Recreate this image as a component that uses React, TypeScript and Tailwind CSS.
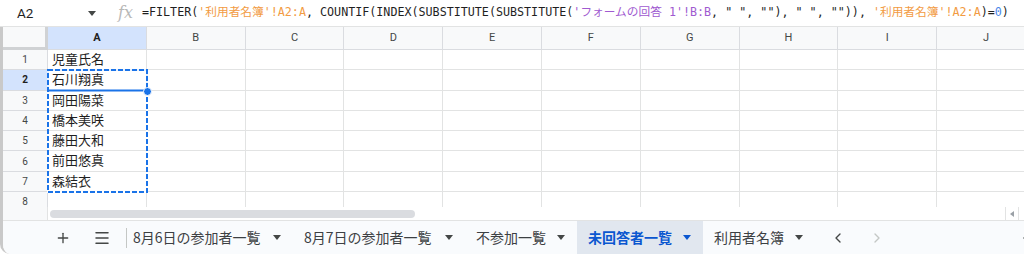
import { Plus, Menu, ChevronLeft, ChevronRight } from 'lucide-react';

const COLS = ['A', 'B', 'C', 'D', 'E', 'F', 'G', 'H', 'I', 'J'];
const NAMES = ['児童氏名', '石川翔真', '岡田陽菜', '橋本美咲', '藤田大和', '前田悠真', '森結衣'];

const TABS = [
  { name: '8月6日の参加者一覧', w: 'w-[129px]' },
  { name: '8月7日の参加者一覧', w: 'w-[130px]' },
  { name: '不参加一覧', w: 'w-[70px]' },
  { name: '未回答者一覧', w: 'w-[84px]', active: true },
  { name: '利用者名簿', w: 'w-[70px]' },
];

const ui = { fontFamily: 'Roboto, "Noto Sans CJK JP", sans-serif' };
const mono = { fontFamily: '"DejaVu Sans Mono", "Noto Sans CJK JP", monospace' };
const cellFont = { fontFamily: '"Liberation Sans", "Noto Sans CJK JP", sans-serif' };

function Caret({ color = '#444746' }: { color?: string }) {
  return (
    <svg width="8" height="5" viewBox="0 0 8 5" className="shrink-0">
      <path d="M0 0h8L4 5z" fill={color} />
    </svg>
  );
}

function Row({ n, text, selected }: { n: number; text?: string; selected?: boolean }) {
  return (
    <div className="flex h-[20.3px] shrink-0">
      <div
        className={`w-[45px] shrink-0 flex items-center justify-center text-[10px] border-r border-b border-[#dadce0] ${
          selected ? 'bg-[#d3e3fd] font-bold text-[#1f1f1f]' : 'bg-[#f8f9fa] text-[#444746]'
        }`}
      >
        {n}
      </div>
      {COLS.map((c, i) => (
        <div
          key={c}
          className="w-[98.8px] shrink-0 border-r border-b border-[#e2e3e3] flex items-center pl-[4px] text-[13px] text-[#1f1f1f]"
          style={cellFont}
        >
          {i === 0 ? text : null}
        </div>
      ))}
    </div>
  );
}

export default function App() {
  return (
    <div className="w-[1024px] h-[254px] overflow-hidden bg-white flex flex-col" style={ui}>
      {/* formula bar */}
      <div className="h-[27px] shrink-0 flex items-center border-b border-[#e2e3e3] whitespace-nowrap">
        <span className="ml-[17px] w-[71px] text-[13.5px] text-[#1f1f1f]">A2</span>
        <Caret />
        <span
          className="ml-[22px] text-[16px] italic text-[#b8b8b8] leading-none"
          style={{ fontFamily: '"DejaVu Serif", serif' }}
        >
          fx
        </span>
        <span className="ml-[9px] text-[11.7px] text-[#1f1f1f]" style={mono}>
          =FILTER(<span className="text-[#f29b43]">'利用者名簿'!A2:A</span>, COUNTIF(INDEX(SUBSTITUTE(SUBSTITUTE(
          <span className="text-[#a05ad0]">'フォームの回答 1'!B:B</span>, " ", ""), " ", "")),{' '}
          <span className="text-[#f29b43]">'利用者名簿'!A2:A</span>)=<span className="text-[#4a86e8]">0</span>)
        </span>
      </div>

      {/* sheet */}
      <div className="flex-1 flex flex-col border-l-[3px] border-[#c9c9c9] rounded-bl-[10px] overflow-hidden">
        {/* column headers */}
        <div className="flex h-[23px] shrink-0">
          <div className="w-[45px] shrink-0 bg-[#f8f9fa] border-r-[3px] border-b-[3px] border-[#d0d2d4]" />
          {COLS.map((c, i) => (
            <div
              key={c}
              className={`w-[98.8px] shrink-0 flex items-center justify-center text-[11px] border-r border-b border-[#dadce0] ${
                i === 0 ? 'bg-[#d3e3fd] font-bold text-[#1f1f1f]' : 'bg-[#f8f9fa] text-[#444746]'
              }`}
            >
              {c}
            </div>
          ))}
        </div>

        {/* rows */}
        <div className="relative flex flex-col shrink-0">
          {NAMES.map((t, i) => (
            <Row key={i} n={i + 1} text={t} selected={i === 1} />
          ))}
          <div className="h-[15px] overflow-hidden shrink-0">
            <Row n={8} />
          </div>

          {/* copy marquee + active cell */}
          <svg className="absolute left-[44px] top-[19.3px]" width="102" height="125" viewBox="0 0 102 125">
            <rect x="1" y="1" width="99" height="20.5" fill="none" stroke="#1a73e8" strokeWidth="2" />
            <rect x="1" y="1" width="99" height="122" fill="none" stroke="#ffffff" strokeWidth="2" strokeDasharray="5 2" strokeDashoffset="5" opacity="0.9" />
            <rect x="1" y="1" width="99" height="122" fill="none" stroke="#1a73e8" strokeWidth="2" strokeDasharray="5 2" />
          </svg>
          <div className="absolute left-[140px] top-[37px] w-[9px] h-[9px] rounded-full bg-[#1a73e8] border border-white" />
        </div>

        {/* horizontal scrollbar */}
        <div className="flex h-[14px] shrink-0 border-b border-[#e2e3e3]">
          <div className="w-[45px] shrink-0 bg-[#f8f9fa] border-r border-[#e2e3e3]" />
          <div className="flex-1 flex items-center pl-[2px]">
            <div className="w-[365px] h-[8px] rounded-full bg-[#dadce0]" />
          </div>
          <div className="w-[14px] shrink-0 border-l border-r border-[#e2e3e3] flex items-center justify-center mr-[5px]">
            <svg width="4" height="6" viewBox="0 0 4 6">
              <path d="M4 0v6L0 3z" fill="#9aa0a6" />
            </svg>
          </div>
        </div>

        {/* sheet tabs */}
        <div className="flex-1 flex items-center bg-[#f9fbfd] whitespace-nowrap">
          <div className="ml-[44px] w-[32px] h-full flex items-center justify-center text-[#444746]">
            <Plus size={16} strokeWidth={2} />
          </div>
          <div className="ml-[7px] w-[32px] h-full flex items-center justify-center text-[#444746]">
            <Menu size={18} strokeWidth={2} />
          </div>
          <div className="ml-[8px] w-px h-[20px] bg-[#c4c7c5]" />
          {TABS.map((t, i) => (
            <div
              key={t.name}
              className={`h-full flex items-center gap-[11px] pr-[12px] ${i === 0 ? 'pl-[6px]' : 'pl-[11px]'} ${
                t.active ? 'bg-[#e1e7ef]' : ''
              }`}
            >
              <span
                className={`${t.w} text-[14px] ${t.active ? 'font-bold text-[#0b57d0]' : 'font-normal text-[#3c4043]'}`}
                style={{ fontFamily: '"Noto Sans CJK JP", sans-serif' }}
              >
                {t.name}
              </span>
              <Caret color={t.active ? '#0b57d0' : '#444746'} />
            </div>
          ))}
          <div className="ml-[15px] w-[16px] flex justify-center text-[#444746]">
            <ChevronLeft size={16} strokeWidth={2} />
          </div>
          <div className="ml-[23px] w-[16px] flex justify-center text-[#c4c7c5]">
            <ChevronRight size={16} strokeWidth={2} />
          </div>
          <div className="ml-auto mr-[-10px] w-[16px] flex justify-center text-[#444746]">
            <ChevronLeft size={16} strokeWidth={2} />
          </div>
        </div>
      </div>
    </div>
  );
}
